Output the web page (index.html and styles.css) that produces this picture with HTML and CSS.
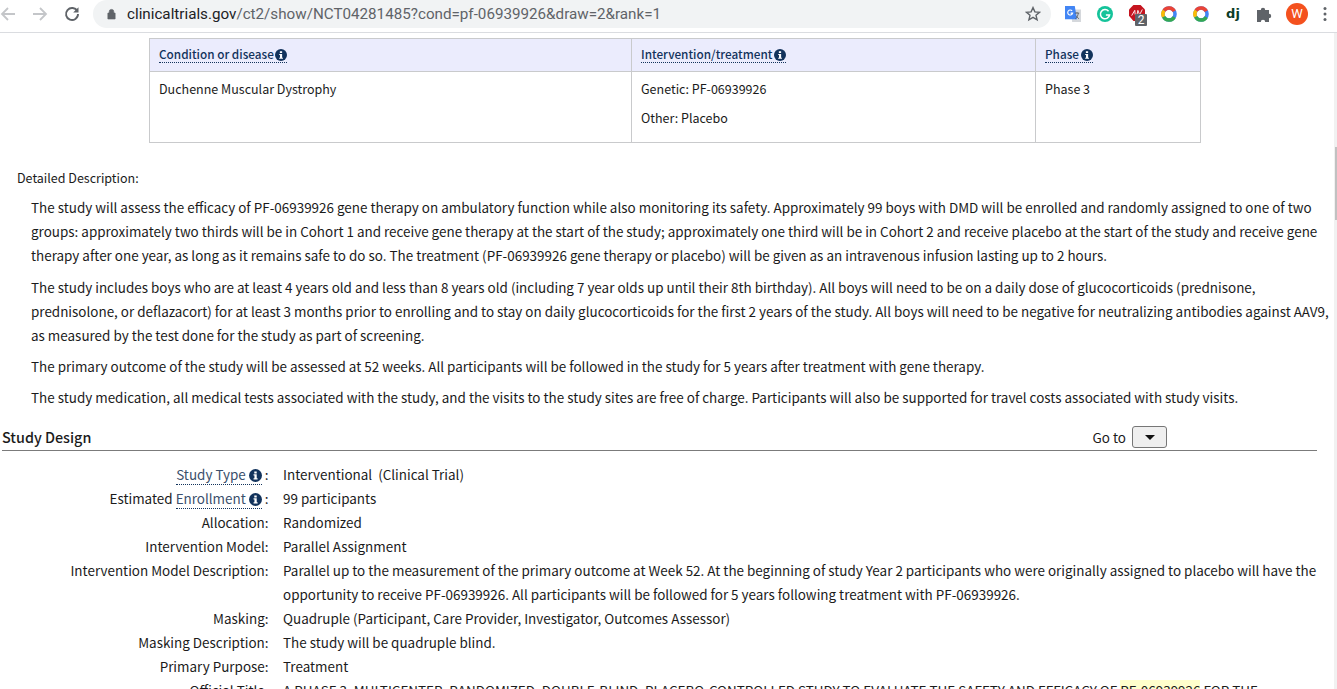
FILE: index.html
```html
<!DOCTYPE html>
<html lang="en">
<head>
<meta charset="utf-8">
<title>ClinicalTrials.gov</title>
<link rel="stylesheet" href="styles.css">
</head>
<body>
<header class="toolbar">
  <div class="nav">
    <svg class="nav-icon" viewBox="0 0 16 16"><path d="M15 8H2.500M8 2 2 8l6 6" class="arrow"/></svg>
    <svg class="nav-icon" viewBox="0 0 16 16"><path d="M1 8h12.500M8 2l6 6-6 6" class="arrow"/></svg>
    <svg class="nav-icon reload" viewBox="0 0 16 16"><path d="M13.300 5.200A6 6 0 1 0 14 8" class="reload-line"/><path d="M14.500 1.200v5.300H9.200z" class="reload-head"/></svg>
  </div>
  <div class="omnibox">
    <svg class="lock" viewBox="0 0 10 12"><path d="M2.500 5V3.400a2.500 2.500 0 0 1 5 0V5M1 5h8v6.500H1z" class="lock-shape"/></svg>
    <span class="url"><span class="url-host">clinicaltrials.gov</span>/ct2/show/NCT04281485?cond=pf-06939926&amp;draw=2&amp;rank=1</span>
    <svg class="star" viewBox="0 0 16 16"><path d="m8 1.600 1.900 4.300 4.600.4-3.500 3 1.100 4.500L8 11.400l-4.100 2.400L5 9.300l-3.500-3 4.600-.4z"/></svg>
  </div>
  <div class="extensions">
    <svg class="ext" viewBox="0 0 18 18"><path d="M7 4h11v14H8z" class="tr-grey"/><path d="M0 0h11l2.500 15H0z" class="tr-blue"/><path d="M11 8h5m-2.500-1.200V8m-2 6.500c2-1.500 3-3.500 3.500-6.500m-2.500 3 3 3.500" class="tr-mark"/><path d="M8 5.500A2.800 2.800 0 1 0 8.600 8H6.300" class="tr-g"/></svg>
    <svg class="ext" viewBox="0 0 18 18"><circle cx="9" cy="9" r="9" class="gram-bg"/><path d="M13 5.800A5.200 5.200 0 1 0 14.200 10H10" class="gram-g"/></svg>
    <span class="ext-badged">
      <svg class="ext adb" viewBox="0 0 18 18"><path d="M5 0h8l5 5v7l-5 6H5l-5-6V5z" class="adb-bg"/><path d="M3 12 6.500 6 7 11M9 11l1-5 1.500 4M12.500 10 15 5" class="adb-mark"/></svg>
      <span class="badge">2</span>
    </span>
    <svg class="ext" viewBox="0 0 18 18"><g class="ring"><circle cx="9" cy="9" r="6.800" class="r-blue"/><path d="M2.900 12.100A6.800 6.800 0 0 0 14.900 12.400" class="r-green"/><path d="M2.900 12.100A6.800 6.800 0 0 1 3.500 5" class="r-yellow"/><path d="M3.500 5A6.800 6.800 0 0 1 15 5.800" class="r-red"/></g></svg>
    <svg class="ext" viewBox="0 0 18 18"><g class="ring"><circle cx="9" cy="9" r="6.800" class="r-blue"/><path d="M2.900 12.100A6.800 6.800 0 0 0 14.900 12.400" class="r-green"/><path d="M2.900 12.100A6.800 6.800 0 0 1 3.500 5" class="r-yellow"/><path d="M3.500 5A6.800 6.800 0 0 1 15 5.800" class="r-red"/></g></svg>
    <span class="ext-dj">dj</span>
    <svg class="ext" viewBox="0 0 16 16"><path d="M0 4h3.800a2.200 2.200 0 1 1 4.400 0H12v3.800a2.200 2.200 0 1 1 0 4.400V16H8.200a2.200 2.200 0 1 0-4.400 0H0z" class="puzzle"/></svg>
    <span class="avatar">W</span>
    <svg class="menu" viewBox="0 0 4 16"><circle cx="2" cy="2.500" r="1.500"/><circle cx="2" cy="8" r="1.500"/><circle cx="2" cy="13.500" r="1.500"/></svg>
  </div>
</header>

<div class="viewport">
  <main class="content">
    <table class="arms">
      <thead>
        <tr>
          <th class="col-a"><span class="term">Condition or disease <svg class="info" viewBox="0 0 16 16"><circle cx="8" cy="8" r="8"/><path class="info-i" d="M6.500 3h3v2.400h-3zM5.600 6.600h3.900v4.900h1.100V13H5.600v-1.500h1.100V8.100H5.600z"/></svg></span></th>
          <th class="col-b"><span class="term">Intervention/treatment <svg class="info" viewBox="0 0 16 16"><circle cx="8" cy="8" r="8"/><path class="info-i" d="M6.500 3h3v2.400h-3zM5.600 6.600h3.900v4.900h1.100V13H5.600v-1.500h1.100V8.100H5.600z"/></svg></span></th>
          <th class="col-c"><span class="term">Phase <svg class="info" viewBox="0 0 16 16"><circle cx="8" cy="8" r="8"/><path class="info-i" d="M6.500 3h3v2.400h-3zM5.600 6.600h3.900v4.900h1.100V13H5.600v-1.500h1.100V8.100H5.600z"/></svg></span></th>
        </tr>
      </thead>
      <tbody>
        <tr>
          <td>Duchenne Muscular Dystrophy</td>
          <td><p class="cell-line">Genetic: PF-06939926</p><p class="cell-line">Other: Placebo</p></td>
          <td>Phase 3</td>
        </tr>
      </tbody>
    </table>

    <section class="description">
      <div class="desc-label">Detailed Description:</div>
      <div class="desc-body">
        <p>The study will assess the efficacy of PF-06939926 gene therapy on ambulatory function while also monitoring its safety. Approximately 99 boys with DMD will be enrolled and randomly assigned to one of two groups: approximately two thirds will be in Cohort 1 and receive gene therapy at the start of the study; approximately one third will be in Cohort 2 and receive placebo at the start of the study and receive gene therapy after one year, as long as it remains safe to do so. The treatment (PF-06939926 gene therapy or placebo) will be given as an intravenous infusion lasting up to 2 hours.</p>
        <p>The study includes boys who are at least 4 years old and less than 8 years old (including 7 year olds up until their 8th birthday). All boys will need to be on a daily dose of glucocorticoids (prednisone, prednisolone, or deflazacort) for at least 3 months prior to enrolling and to stay on daily glucocorticoids for the first 2 years of the study. All boys will need to be negative for neutralizing antibodies against AAV9, as measured by the test done for the study as part of screening.</p>
        <p>The primary outcome of the study will be assessed at 52 weeks. All participants will be followed in the study for 5 years after treatment with gene therapy.</p>
        <p>The study medication, all medical tests associated with the study, and the visits to the study sites are free of charge. Participants will also be supported for travel costs associated with study visits.</p>
      </div>
    </section>

    <div class="section-head">
      <h2 class="section-title">Study Design</h2>
      <div class="goto">Go to <button class="goto-btn" type="button"><span class="caret"></span></button></div>
    </div>

    <dl class="design">
      <dt><span class="term-plain">Study Type <svg class="info big" viewBox="0 0 16 16"><circle cx="8" cy="8" r="8"/><path class="info-i" d="M6.500 3h3v2.400h-3zM5.600 6.600h3.900v4.900h1.100V13H5.600v-1.500h1.100V8.100H5.600z"/></svg></span> :</dt>
      <dd>Interventional &nbsp;(Clinical Trial)</dd>
      <dt>Estimated <span class="term-plain">Enrollment <svg class="info big" viewBox="0 0 16 16"><circle cx="8" cy="8" r="8"/><path class="info-i" d="M6.500 3h3v2.400h-3zM5.600 6.600h3.900v4.900h1.100V13H5.600v-1.500h1.100V8.100H5.600z"/></svg></span> :</dt>
      <dd>99 participants</dd>
      <dt>Allocation:</dt>
      <dd>Randomized</dd>
      <dt>Intervention Model:</dt>
      <dd>Parallel Assignment</dd>
      <dt>Intervention Model Description:</dt>
      <dd>Parallel up to the measurement of the primary outcome at Week 52. At the beginning of study Year 2 participants who were originally assigned to placebo will have the opportunity to receive PF-06939926. All participants will be followed for 5 years following treatment with PF-06939926.</dd>
      <dt>Masking:</dt>
      <dd>Quadruple (Participant, Care Provider, Investigator, Outcomes Assessor)</dd>
      <dt>Masking Description:</dt>
      <dd>The study will be quadruple blind.</dd>
      <dt>Primary Purpose:</dt>
      <dd>Treatment</dd>
      <dt>Official Title:</dt>
      <dd>A PHASE 3, MULTICENTER, RANDOMIZED, DOUBLE-BLIND, PLACEBO-CONTROLLED STUDY TO EVALUATE THE SAFETY AND EFFICACY OF <mark class="hit">PF-06939926</mark> FOR THE TREATMENT OF DUCHENNE MUSCULAR DYSTROPHY</dd>
    </dl>
  </main>
  <div class="scrollbar"><div class="thumb"></div></div>
</div>
</body>
</html>
```
FILE: styles.css
```css
* { box-sizing: border-box; }
html, body { margin: 0; height: 100%; overflow: hidden; background: #fff; }
body {
  font-family: "Noto Sans CJK SC", "Noto Sans", sans-serif;
  font-size: 13.44px;
  color: #1b1b1b;
  display: flex;
  flex-direction: column;
}
.toolbar {
  flex: none;
  height: 33px;
  display: flex;
  align-items: center;
  background: #fff;
  border-bottom: 1px solid #dadce0;
  padding-bottom: 5px;
}
.nav { display: flex; align-items: center; width: 93px; padding-left: 0; gap: 16px; flex: none; }
.nav-icon { width: 16px; height: 16px; flex: none; }
.arrow { fill: none; stroke: #c4c6c9; stroke-width: 1.800; }
.reload-line { fill: none; stroke: #5f6368; stroke-width: 1.900; }
.reload-head { fill: #5f6368; }
.omnibox {
  width: 958px;
  height: 28px;
  flex: none;
  display: flex;
  align-items: center;
  background: #f1f3f4;
  border-radius: 14px;
  padding: 0 10px 0 14px;
}
.lock { width: 9px; height: 12px; flex: none; }
.lock-shape { fill: #5f6368; stroke: #5f6368; stroke-width: 0.800; fill-rule: evenodd; }
.url {
  margin-left: 11px;
  flex: 1;
  font-family: "Roboto", sans-serif;
  font-size: 15.2px;
  color: #5f6368;
  white-space: nowrap;
}
.url-host { color: #202124; }
.star { width: 16px; height: 16px; fill: none; stroke: #5f6368; stroke-width: 1.400; }
.extensions { display: flex; align-items: center; gap: 16px; padding-left: 14px; flex: 1; }
.ext { width: 16px; height: 16px; flex: none; display: block; }
.tr-blue { fill: #4285f4; }
.tr-grey { fill: #d5d8dc; }
.tr-mark { fill: none; stroke: #5f6368; stroke-width: 1; }
.tr-g { fill: none; stroke: #fff; stroke-width: 1.300; }
.gram-bg { fill: #15c39a; }
.gram-g { fill: none; stroke: #fff; stroke-width: 1.700; }
.ext-badged { position: relative; display: block; flex: none; }
.adb { margin-top: -2px; }
.adb-bg { fill: #c5141f; }
.adb-mark { fill: none; stroke: #fff; stroke-width: 1; }
.badge {
  position: absolute;
  left: 6px;
  top: 7px;
  width: 12px;
  height: 12px;
  background: #5f6368;
  border-radius: 1px;
  color: #fff;
  font: 12px/12px "Roboto", sans-serif;
  text-align: center;
}
.ring { fill: none; stroke-width: 4; }
.r-blue { stroke: #4285f4; }
.r-red { stroke: #ea4335; }
.r-yellow { stroke: #fbbc04; }
.r-green { stroke: #34a853; }
.ext-dj {
  width: 16px;
  text-align: center;
  font: bold 13px/16px "DejaVu Sans", sans-serif;
  color: #0c3c26;
  flex: none;
}
.puzzle { fill: #5f6368; }
.avatar {
  width: 22px;
  height: 22px;
  flex: none;
  margin-left: -3px;
  border-radius: 50%;
  background: #f4511e;
  color: #fff;
  font: 13px/22px "Roboto", sans-serif;
  text-align: center;
}
.menu { width: 4px; height: 16px; fill: #5f6368; flex: none; margin-left: -1px; }

.viewport { flex: 1; min-height: 0; display: flex; overflow: hidden; }
.content { width: 1334px; flex: none; padding: 5px 0 0; overflow: hidden; }
.scrollbar { width: 3px; flex: none; background: #f1f1f1; padding: 114px 0 0 1px; }
.thumb { height: 73px; background: #c1c1c1; }

.arms {
  border-collapse: collapse;
  table-layout: fixed;
  width: 1051px;
  margin-left: 149px;
  line-height: 20px;
}
.arms th, .arms td { border: 1px solid #c9cacc; padding: 0 9px; text-align: left; vertical-align: top; }
.arms th { background: #ebecfd; height: 33px; padding-top: 5px; font-weight: 500; font-size: 11.75px; color: #12335c; }
.arms td { height: 71px; padding-top: 7px; color: #1b1b1b; font-size: 12.5px; }
.col-a { width: 482px; }
.col-b { width: 404px; }
.col-c { width: 165px; }
.term { border-bottom: 1px dotted #12335c; display: inline-block; line-height: 17px; }
.cell-line { margin: 0 0 9px; }
.info { width: 12px; height: 12px; fill: #12335c; vertical-align: -2px; margin-left: -1px; }
.info.big { width: 13px; height: 13px; vertical-align: -2px; margin-left: 0; }
.info-i { fill: #fff; }

.description { margin-top: 23px; }
.desc-label { padding-left: 17px; line-height: 24px; font-size: 12.5px; }
.desc-body { padding: 5px 0 0 31px; width: 1331px; line-height: 24px; }
.desc-body p { margin: 0 0 7px; }
.desc-body p:first-child { margin-bottom: 8px; }

.section-head {
  display: flex;
  justify-content: space-between;
  align-items: flex-end;
  margin: 10px 0 0 2px;
  width: 1315px;
  height: 32px;
  border-bottom: 1px solid #7b7b7b;
  padding: 0 150px 1px 0;
}
.section-title { margin: 0; font-size: 14.35px; font-weight: 500; line-height: 24px; color: #1b1b1b; }
.goto { display: flex; align-items: center; gap: 6px; line-height: 21px; padding-bottom: 1px; }
.goto-btn {
  width: 35px;
  height: 22px;
  padding: 0;
  border: 1px solid #767676;
  border-radius: 3px;
  background: #efefef;
  display: flex;
  align-items: center;
  justify-content: center;
}
.caret { width: 0; height: 0; border: 5px solid transparent; border-top-color: #111; border-bottom: 0; }

.design {
  margin: 11px 0 0;
  display: grid;
  grid-template-columns: 268.500px 1034px;
  column-gap: 14.500px;
  line-height: 24px;
}
.design dt { text-align: right; }
.design dd { margin: 0; }
.term-plain { color: #3a4f6c; border-bottom: 1px dotted #12335c; }
.hit { background: #ffffcc; color: inherit; }
```
